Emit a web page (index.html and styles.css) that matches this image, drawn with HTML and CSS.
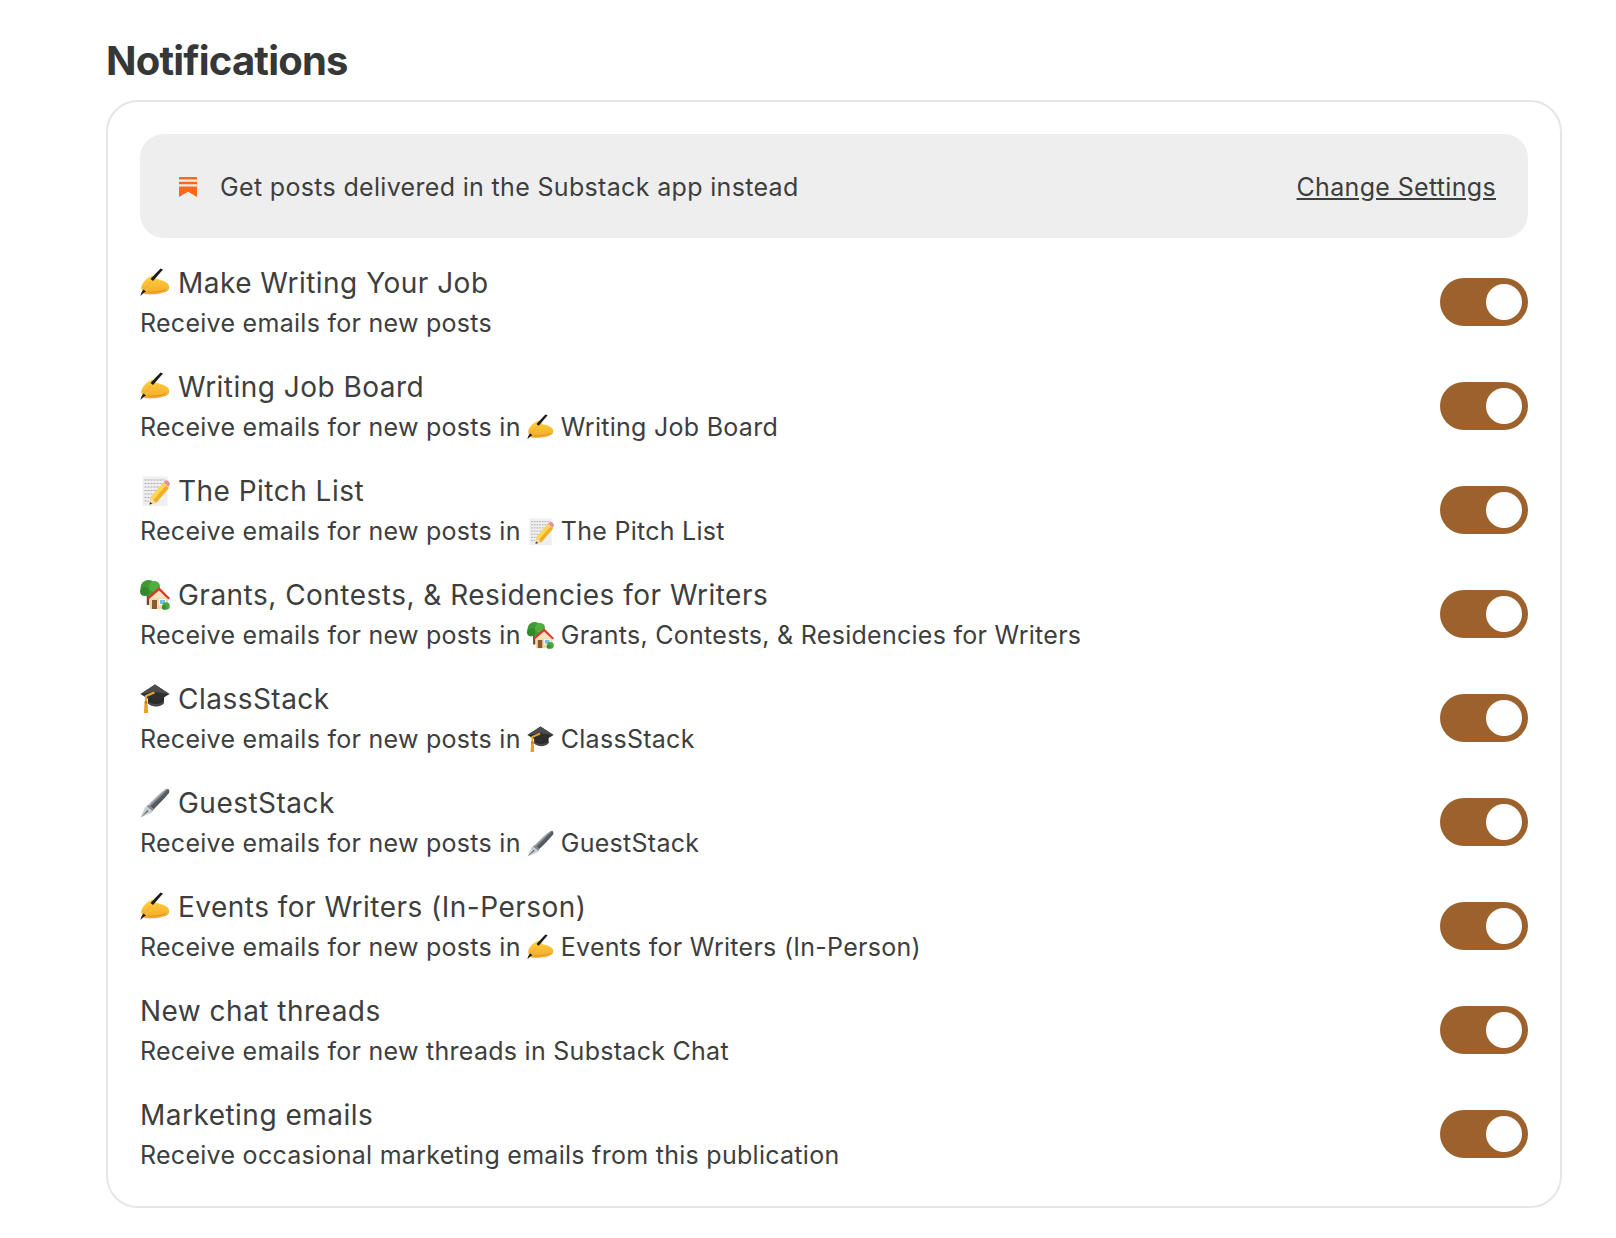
FILE: index.html
```html
<!DOCTYPE html>
<html lang="en">
<head>
<meta charset="utf-8">
<title>Notifications</title>
<link rel="stylesheet" href="styles.css">
</head>
<body>
<svg class="defs" width="0" height="0" aria-hidden="true">
  <defs>
    <linearGradient id="pen-body" x1="0" y1="0" x2="1" y2="1">
      <stop offset="0" stop-color="#aeb6bf"/>
      <stop offset="0.35" stop-color="#f4f6f8"/>
      <stop offset="0.5" stop-color="#5a6068"/>
      <stop offset="1" stop-color="#22262c"/>
    </linearGradient>
    <linearGradient id="hand-fill" x1="0" y1="0" x2="0" y2="1">
      <stop offset="0" stop-color="#ffd23f"/>
      <stop offset="1" stop-color="#f3a92a"/>
    </linearGradient>
    <symbol id="e-hand" viewBox="0 0 30 30">
      <path d="M1.500 18 C3.500 13 8 9 12.500 7.500 C14.500 7.500 15.500 9.500 16.500 11 C20 11.500 24.500 13 27 15 C29.800 16.800 29.800 20.500 28 22.500 C24 25.500 14 26.800 6.500 26.300 C3 26 1 22.500 1.500 18 Z" fill="url(#hand-fill)"/>
      <path d="M20.500 0.500 L23 1.500 L13 13 L10.500 11 Z" fill="#1d1d1d"/>
      <path d="M3.500 21.500 L6 23.500 L3 25.500 L0.500 28 L1.200 25 Z" fill="#1d1d1d"/>
      <path d="M8 24 C13 25 20 24 26 21.500" fill="none" stroke="#dd9326" stroke-width="1"/>
      <path d="M11 14 C9 16 7.500 18 7 20" fill="none" stroke="#e9a52c" stroke-width="0.800"/>
    </symbol>
    <symbol id="e-memo" viewBox="0 0 30 30">
      <rect x="2.500" y="0.500" width="25" height="29.500" fill="#efefef"/>
      <g stroke="#9a9a9a" stroke-width="0.800" stroke-dasharray="2 1">
        <path d="M4.500 4 H25 M4.500 7.500 H24 M4.500 11 H21 M4.500 14.500 H17 M4.500 18 H13 M4.500 21.500 H10 M4.500 25 H9"/>
      </g>
      <path d="M23 7 L29 12 L16 27 L9.500 28.500 L10.500 21.500 Z" fill="#f2ae22"/>
      <path d="M23 7 L26 9.500 L13 24.500 L10.500 21.500 Z" fill="#fcd757"/>
      <path d="M23.500 6.500 L25.500 4.500 C27 3.500 30.500 6.500 29.800 8.500 L28.500 11 Z" fill="#ea8f93"/>
      <path d="M10.500 21.500 L9.500 28.500 L16 27 Z" fill="#f3dcae"/>
      <path d="M10 26 L9.500 28.500 L12.500 27.800 Z" fill="#333"/>
    </symbol>
    <symbol id="e-house" viewBox="0 0 30 30">
      <path d="M8 14 L8 25" stroke="#6d4a2b" stroke-width="2.500"/>
      <circle cx="8.500" cy="8" r="8" fill="#3f9a34"/>
      <circle cx="4.500" cy="11.500" r="4.500" fill="#2f8a2c"/>
      <circle cx="14.500" cy="6.500" r="5.500" fill="#4fae3e"/>
      <path d="M10 17 H28 V29 H10 Z" fill="#f6d9a6"/>
      <path d="M19 10 L28 18 H10 Z" fill="#f9e3bd"/>
      <path d="M7 18 L19 7 L30 18 L28.500 19.500 L19 10.500 L8.500 19.500 Z" fill="#d6392e"/>
      <rect x="12" y="20" width="5" height="9" fill="#8a5a33"/>
      <rect x="19.500" y="19.500" width="6" height="5" fill="#6fc0ea" stroke="#fff" stroke-width="0.800"/>
      <circle cx="26" cy="26" r="3.800" fill="#4aa83c"/>
      <circle cx="24" cy="27.500" r="2.200" fill="#378f30"/>
    </symbol>
    <symbol id="e-cap" viewBox="0 0 30 30">
      <path d="M8 13 V19 C11 23.500 21 23.500 24 19 V13 Z" fill="#2a2a2a"/>
      <path d="M8 17 C12 21 20 21 24 17 V19 C20 23 12 23 8 19.500 Z" fill="#4a4a4a"/>
      <path d="M15 0.500 L29.500 10 L15 19 L0.500 10 Z" fill="#2f2f2f"/>
      <path d="M15 0.500 L29.500 10 L15 8 L0.500 10 Z" fill="#4c4c4c"/>
      <path d="M14.500 8.500 L6 12 V19" fill="none" stroke="#eda12a" stroke-width="2"/>
      <path d="M4.500 18 H7.500 L8 29 H4 Z" fill="#f19a1f"/>
      <rect x="4.800" y="17" width="2.500" height="2.500" fill="#c77a13"/>
    </symbol>
    <symbol id="e-pen" viewBox="0 0 30 30">
      <path d="M26.500 0.800 C29 0.500 30 2.500 29 5 C24 11 18 17 13.500 21.500 L8 17 C13 11.500 20 4.500 26.500 0.800 Z" fill="url(#pen-body)"/>
      <path d="M8 17 L13.500 21.500 L12 24.500 L3 28.500 L0.800 29.500 L1.500 27 L5 19.500 Z" fill="#c9cdd2"/>
      <path d="M8 17 L13.500 21.500 L12.700 23 L7 18.500 Z" fill="#7d848c"/>
      <path d="M1 29.300 L7.500 22 L8.500 23 Z" fill="#555c64"/>
    </symbol>
    <symbol id="e-sub" viewBox="0 0 18 20">
      <path d="M0 0 H18 V2.400 H0 Z M0 4.800 H18 V7.200 H0 Z M0 9.600 H18 V20 L9 14.800 L0 20 Z" fill="#ff6719"/>
    </symbol>
  </defs>
</svg>

<main class="page">
  <h1 class="heading">Notifications</h1>
  <section class="card">
    <div class="banner">
      <div class="banner-left">
        <svg class="sub-logo"><use href="#e-sub"/></svg>
        <span>Get posts delivered in the Substack app instead</span>
      </div>
      <a class="banner-link" href="#">Change Settings</a>
    </div>

    <ul class="rows">
      <li class="row">
        <div class="row-text">
          <div class="row-title"><svg class="emoji"><use href="#e-hand"/></svg><span>Make Writing Your Job</span></div>
          <div class="row-sub">Receive emails for new posts</div>
        </div>
        <span class="toggle"><span class="knob"></span></span>
      </li>
      <li class="row">
        <div class="row-text">
          <div class="row-title"><svg class="emoji"><use href="#e-hand"/></svg><span>Writing Job Board</span></div>
          <div class="row-sub">Receive emails for new posts in<svg class="emoji small"><use href="#e-hand"/></svg>Writing Job Board</div>
        </div>
        <span class="toggle"><span class="knob"></span></span>
      </li>
      <li class="row">
        <div class="row-text">
          <div class="row-title"><svg class="emoji"><use href="#e-memo"/></svg><span>The Pitch List</span></div>
          <div class="row-sub">Receive emails for new posts in<svg class="emoji small"><use href="#e-memo"/></svg>The Pitch List</div>
        </div>
        <span class="toggle"><span class="knob"></span></span>
      </li>
      <li class="row">
        <div class="row-text">
          <div class="row-title"><svg class="emoji"><use href="#e-house"/></svg><span>Grants, Contests, &amp; Residencies for Writers</span></div>
          <div class="row-sub">Receive emails for new posts in<svg class="emoji small"><use href="#e-house"/></svg>Grants, Contests, &amp; Residencies for Writers</div>
        </div>
        <span class="toggle"><span class="knob"></span></span>
      </li>
      <li class="row">
        <div class="row-text">
          <div class="row-title"><svg class="emoji"><use href="#e-cap"/></svg><span>ClassStack</span></div>
          <div class="row-sub">Receive emails for new posts in<svg class="emoji small"><use href="#e-cap"/></svg>ClassStack</div>
        </div>
        <span class="toggle"><span class="knob"></span></span>
      </li>
      <li class="row">
        <div class="row-text">
          <div class="row-title"><svg class="emoji"><use href="#e-pen"/></svg><span>GuestStack</span></div>
          <div class="row-sub">Receive emails for new posts in<svg class="emoji small"><use href="#e-pen"/></svg>GuestStack</div>
        </div>
        <span class="toggle"><span class="knob"></span></span>
      </li>
      <li class="row">
        <div class="row-text">
          <div class="row-title"><svg class="emoji"><use href="#e-hand"/></svg><span>Events for Writers (In-Person)</span></div>
          <div class="row-sub">Receive emails for new posts in<svg class="emoji small"><use href="#e-hand"/></svg>Events for Writers (In-Person)</div>
        </div>
        <span class="toggle"><span class="knob"></span></span>
      </li>
      <li class="row">
        <div class="row-text">
          <div class="row-title"><span>New chat threads</span></div>
          <div class="row-sub">Receive emails for new threads in Substack Chat</div>
        </div>
        <span class="toggle"><span class="knob"></span></span>
      </li>
      <li class="row">
        <div class="row-text">
          <div class="row-title"><span>Marketing emails</span></div>
          <div class="row-sub">Receive occasional marketing emails from this publication</div>
        </div>
        <span class="toggle"><span class="knob"></span></span>
      </li>
    </ul>
  </section>
</main>
</body>
</html>
```

FILE: styles.css
```css
* { box-sizing: border-box; }

html, body {
  margin: 0;
  padding: 0;
  background: #fff;
}

body {
  font-family: Inter, "Liberation Sans", sans-serif;
  color: #3d3e3e;
}

.defs { position: absolute; }

.page {
  padding: 37px 54px 0 106px;
}

.heading {
  margin: 0 0 15px;
  font-size: 40px;
  line-height: 48px;
  font-weight: 700;
  color: #363737;
  letter-spacing: -0.8px;
}

.card {
  border: 2px solid #e6e6e6;
  border-radius: 32px;
  padding: 32px;
  height: 1108px;
  background: #fff;
}

.banner {
  display: flex;
  align-items: center;
  justify-content: space-between;
  height: 104px;
  padding: 2px 32px 0 39px;
  background: #eee;
  border-radius: 24px;
  font-size: 25px;
  letter-spacing: 0.33px;
}

.banner-left {
  display: flex;
  align-items: center;
  gap: 23px;
}

.sub-logo {
  width: 18px;
  height: 20px;
  flex: none;
}

.banner-link {
  color: #3d3e3e;
  text-decoration: underline;
}

.rows {
  list-style: none;
  margin: 0;
  padding: 12px 0 0;
}

.row {
  display: flex;
  align-items: center;
  justify-content: space-between;
  height: 104px;
}

.row-text {
  padding-top: 2px;
}

.row-title {
  display: flex;
  align-items: center;
  font-size: 28px;
  line-height: 40px;
  letter-spacing: 0.48px;
}

.row-sub {
  display: flex;
  align-items: center;
  font-size: 25px;
  line-height: 40px;
  letter-spacing: 0.28px;
}

.emoji {
  width: 30px;
  height: 30px;
  flex: none;
  margin-right: 8px;
}

.emoji.small {
  width: 27px;
  height: 27px;
  margin: 0 7px 0 6px;
}

.toggle {
  display: flex;
  align-items: center;
  justify-content: flex-end;
  flex: none;
  width: 88px;
  height: 48px;
  padding-right: 6px;
  border-radius: 24px;
  background: #9c612d;
}

.knob {
  display: block;
  width: 36px;
  height: 36px;
  border-radius: 50%;
  background: #fff;
}
```
